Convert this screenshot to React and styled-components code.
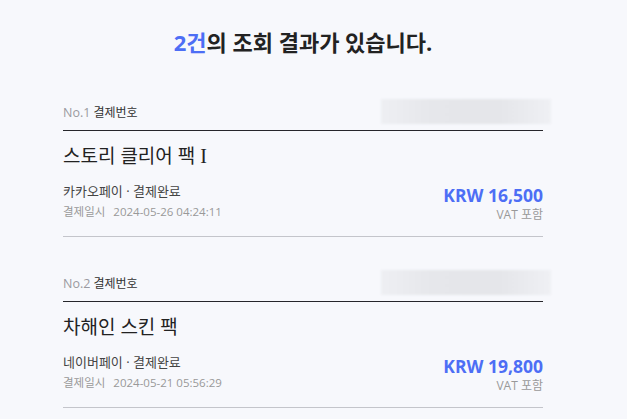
import styled, { createGlobalStyle } from 'styled-components'

const GlobalStyle = createGlobalStyle`
    body {
        margin: 0;
        background: #f7f8fc;
        font-family: 'Open Sans', 'Noto Sans CJK KR', sans-serif;
        color: #222;
    }
`

const orders = [
    {
        no: 1,
        title: '스토리 클리어 팩',
        suffix: 'I',
        method: '카카오페이',
        status: '결제완료',
        date: '2024-05-26 04:24:11',
        price: 'KRW 16,500',
    },
    {
        no: 2,
        title: '차해인 스킨 팩',
        method: '네이버페이',
        status: '결제완료',
        date: '2024-05-21 05:56:29',
        price: 'KRW 19,800',
    },
]

const App = () => {
    return (
        <>
            <GlobalStyle />
            <Page>
                <Title>
                    <Count>2건</Count>의 조회 결과가 있습니다.
                </Title>
                <List>
                    {orders.map((order) => (
                        <Order key={order.no}>
                            <OrderHeader>
                                <OrderLabel>
                                    <OrderNo>No.{order.no}</OrderNo> 결제번호
                                </OrderLabel>
                                <Masked />
                            </OrderHeader>
                            <OrderTitle>
                                {order.title}
                                {order.suffix && <Roman> {order.suffix}</Roman>}
                            </OrderTitle>
                            <OrderBody>
                                <Info>
                                    <Method>
                                        {order.method} · {order.status}
                                    </Method>
                                    <PaidAt>
                                        <span>결제일시</span>
                                        {order.date}
                                    </PaidAt>
                                </Info>
                                <PriceBox>
                                    <Price>{order.price}</Price>
                                    <Vat>VAT 포함</Vat>
                                </PriceBox>
                            </OrderBody>
                        </Order>
                    ))}
                </List>
            </Page>
        </>
    )
}

const Page = styled.main`
    width: 480px;
    margin-left: 63px;
    padding-top: 27px;
`

const Title = styled.h1`
    margin: 0;
    text-align: center;
    font-size: 22px;
    line-height: 30px;
    font-weight: 700;
    color: #222;
`

const Count = styled.span`
    color: #4d6ef5;
`

const List = styled.div`
    display: flex;
    flex-direction: column;
    gap: 33px;
    margin-top: 42px;
`

const Order = styled.section`
    display: flex;
    flex-direction: column;
    border-bottom: 1px solid #c4c5cb;
`

const OrderHeader = styled.div`
    display: flex;
    justify-content: space-between;
    align-items: flex-end;
    padding-bottom: 6px;
    border-bottom: 1.5px solid #26262b;
`

const OrderLabel = styled.div`
    margin-bottom: 2px;
    font-size: 12px;
    line-height: 18px;
    color: #333;
`

const OrderNo = styled.span`
    color: #9a9aa0;
    font-size: 12.5px;
`

const Masked = styled.div`
    width: 170px;
    height: 25px;
    margin-right: -8px;
    background: linear-gradient(90deg, #eeeff3 0%, #e6e7eb 30%, #e5e6ea 70%, #eff0f4 100%);
    filter: blur(1px);
`

const OrderTitle = styled.h2`
    margin: 12px 0 0;
    font-size: 19px;
    line-height: 26px;
    font-weight: 400;
    color: #222;
`

const Roman = styled.span`
    font-family: 'Liberation Serif', serif;
    font-size: 20px;
`

const OrderBody = styled.div`
    display: flex;
    justify-content: space-between;
    align-items: flex-end;
    margin-top: 13px;
    padding-bottom: 12px;
`

const Info = styled.div`
    display: flex;
    flex-direction: column;
    gap: 3px;
    padding-bottom: 3px;
`

const Method = styled.div`
    font-size: 13px;
    line-height: 18px;
    color: #444;
`

const PaidAt = styled.div`
    font-size: 11.5px;
    line-height: 18px;
    color: #999;
    span {
        margin-right: 8px;
    }
`

const PriceBox = styled.div`
    display: flex;
    flex-direction: column;
    align-items: flex-end;
`

const Price = styled.div`
    font-size: 17.5px;
    line-height: 22px;
    font-weight: 700;
    color: #4d6ef5;
`

const Vat = styled.div`
    font-size: 12px;
    line-height: 18px;
    color: #999;
`

export default App
